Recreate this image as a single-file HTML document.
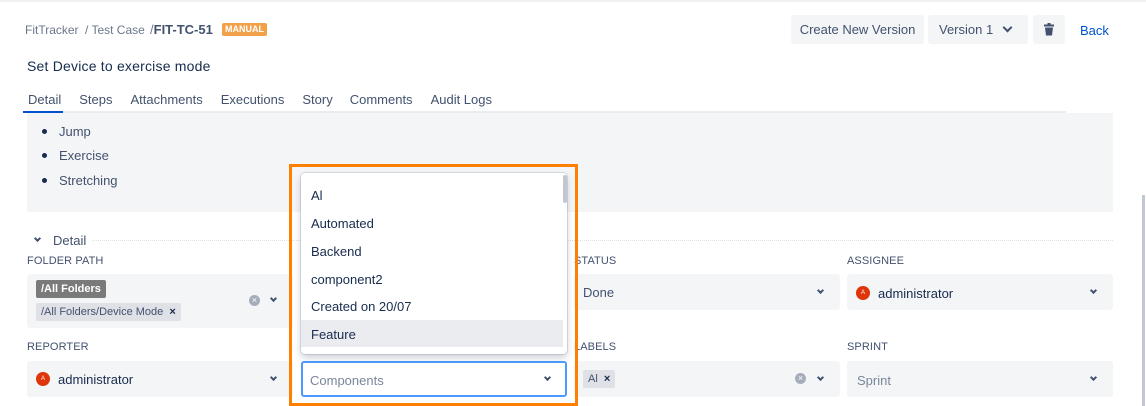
<!DOCTYPE html>
<html><head><meta charset="utf-8"><style>
*{box-sizing:border-box;margin:0;padding:0}
body{width:1146px;height:406px;overflow:hidden;background:#fff;font-family:"Liberation Sans",sans-serif;color:#172b4d;position:relative;font-size:13px}
.a{position:absolute;white-space:nowrap}
.btn{position:absolute;background:#f4f5f7;border-radius:3px;color:#42526e;font-size:13px;line-height:29px;text-align:center;top:15px;height:29px}
.lbl{position:absolute;font-size:11px;color:#42526e;letter-spacing:0.1px}
.fld{position:absolute;background:#f4f5f7;border-radius:3px}
.chev{position:absolute;width:6px;height:6px;border-right:2px solid #42526e;border-bottom:2px solid #42526e;transform:rotate(45deg)}
.av{position:absolute;width:14px;height:14px;border-radius:50%;background:#de350b;color:#fff;font-size:6px;text-align:center;line-height:14px}
.clr{position:absolute;width:11px;height:11px;border-radius:50%;background:#a5adba;color:#fff;font-size:9px;line-height:11px;text-align:center}
.it{position:absolute;left:10px;font-size:13px;color:#172b4d}
</style></head><body>
<div class="a" style="left:0;top:0;width:1146px;height:2px;background:#f0f1f3"></div>
<div class="a" style="left:25px;top:23px;font-size:12px;color:#6b778c">FitTracker</div>
<div class="a" style="left:85px;top:23px;font-size:12px;color:#6b778c">/ Test Case</div>
<div class="a" style="left:150px;top:22px;font-size:13px;color:#6b778c">/<b style="color:#42526e">FIT-TC-51</b></div>
<div class="a" style="left:222px;top:23px;height:13px;padding:0 3px;background:#f3a04a;color:#fff;font-size:9px;font-weight:bold;line-height:13px;border-radius:2px">MANUAL</div>
<div class="a" style="left:27px;top:58px;font-size:14px;color:#172b4d;letter-spacing:0.2px">Set Device to exercise mode</div>
<div class="a" style="left:28px;top:92px;font-size:13px;color:#42526e;word-spacing:0">Detail<span style="margin-left:18px">Steps</span><span style="margin-left:18px">Attachments</span><span style="margin-left:18px">Executions</span><span style="margin-left:18px">Story</span><span style="margin-left:17px">Comments</span><span style="margin-left:18px">Audit Logs</span></div>
<div class="a" style="left:23px;top:111px;width:1043px;height:2px;background:#ebecf0"></div>
<div class="a" style="left:23px;top:111px;width:40px;height:2px;background:#0052cc"></div>

<div class="btn" style="left:791px;width:133px">Create New Version</div>
<div class="btn" style="left:928px;width:100px;text-align:left;padding-left:11px">Version 1</div>
<div class="chev" style="left:1004px;top:24px;width:7px;height:7px"></div>
<div class="btn" style="left:1033px;width:32px"></div>
<svg class="a" style="left:1043px;top:23px" width="12" height="13" viewBox="0 0 12 13"><rect x="1" y="1.5" width="10" height="2" fill="#42526e"/><rect x="4.5" y="0" width="3" height="2" fill="#42526e"/><path d="M2 4.5h8l-1 8H3z" fill="#42526e"/></svg>
<div class="a" style="left:1080px;top:23px;color:#0052cc;font-size:13px">Back</div>

<div class="a" style="left:27px;top:113px;width:1086px;height:99px;background:#f4f5f7"></div>
<div class="a" style="left:42px;top:129px;width:5px;height:5px;border-radius:50%;background:#172b4d"></div>
<div class="a" style="left:59px;top:124px;color:#42526e">Jump</div>
<div class="a" style="left:42px;top:153px;width:5px;height:5px;border-radius:50%;background:#172b4d"></div>
<div class="a" style="left:59px;top:148px;color:#42526e">Exercise</div>
<div class="a" style="left:42px;top:178px;width:5px;height:5px;border-radius:50%;background:#172b4d"></div>
<div class="a" style="left:59px;top:173px;color:#42526e">Stretching</div>

<div class="chev" style="left:35px;top:236px;width:5px;height:5px"></div>
<div class="a" style="left:53px;top:233px;color:#42526e">Detail</div>
<div class="a" style="left:92px;top:240px;width:1021px;border-top:1px dotted #dfe1e6"></div>

<div class="lbl" style="left:27px;top:255px">FOLDER PATH</div>
<div class="lbl" style="left:574px;top:255px">STATUS</div>
<div class="lbl" style="left:847px;top:255px">ASSIGNEE</div>
<div class="fld" style="left:27px;top:274px;width:266px;height:54px"></div>
<div class="a" style="left:36px;top:280px;height:18px;padding:0 5px;background:#7a7a7a;color:#fff;font-size:11px;font-weight:bold;line-height:18px;border-radius:2px">/All Folders</div>
<div class="a" style="left:36px;top:303px;height:18px;padding:0 5px;background:#dfe1e6;color:#42526e;font-size:11px;line-height:18px;border-radius:2px">/All Folders/Device Mode &nbsp;<b style="color:#172b4d">×</b></div>
<div class="clr" style="left:249px;top:295px">×</div>
<div class="chev" style="left:271px;top:296px;width:5px;height:5px"></div>
<div class="fld" style="left:574px;top:274px;width:266px;height:36px"></div>
<div class="a" style="left:583px;top:285px;color:#42526e">Done</div>
<div class="chev" style="left:818px;top:288px;width:5px;height:5px"></div>
<div class="fld" style="left:847px;top:274px;width:266px;height:36px"></div>
<div class="av" style="left:856px;top:286px">A</div>
<div class="a" style="left:878px;top:286px;color:#172b4d">administrator</div>
<div class="chev" style="left:1091px;top:288px;width:5px;height:5px"></div>

<div class="lbl" style="left:27px;top:341px">REPORTER</div>
<div class="lbl" style="left:574px;top:341px">LABELS</div>
<div class="lbl" style="left:847px;top:341px">SPRINT</div>
<div class="fld" style="left:27px;top:361px;width:266px;height:36px"></div>
<div class="av" style="left:36px;top:372px">A</div>
<div class="a" style="left:58px;top:372px;color:#172b4d">administrator</div>
<div class="chev" style="left:271px;top:375px;width:5px;height:5px"></div>
<div class="fld" style="left:574px;top:361px;width:266px;height:36px"></div>
<div class="a" style="left:583px;top:370px;height:18px;padding:0 5px;background:#dfe1e6;color:#42526e;font-size:11px;line-height:18px;border-radius:2px">Al &nbsp;<b style="color:#172b4d">×</b></div>
<div class="clr" style="left:795px;top:373px">×</div>
<div class="chev" style="left:818px;top:375px;width:5px;height:5px"></div>
<div class="fld" style="left:847px;top:361px;width:266px;height:36px"></div>
<div class="a" style="left:857px;top:373px;color:#7a869a">Sprint</div>
<div class="chev" style="left:1091px;top:375px;width:5px;height:5px"></div>

<div class="a" style="left:289px;top:164px;width:289px;height:242px;border:3px solid #ff8000"></div>
<div class="a" style="left:301px;top:173px;width:266px;height:181px;background:#fff;border-radius:4px;box-shadow:0 0 0 1px rgba(9,30,66,.12),0 4px 8px rgba(9,30,66,.2);overflow:hidden">
<div class="a" style="left:0;top:147px;width:262px;height:27px;background:#ebecf0"></div>
<div class="it" style="top:15px">Al</div>
<div class="it" style="top:43px">Automated</div>
<div class="it" style="top:71px">Backend</div>
<div class="it" style="top:99px">component2</div>
<div class="it" style="top:126px">Created on 20/07</div>
<div class="it" style="top:154px">Feature</div>
<div class="a" style="left:262px;top:2px;width:4px;height:28px;background:#c1c7d0;border-radius:2px"></div>
</div>
<div class="a" style="left:301px;top:361px;width:266px;height:36px;border:2px solid #4c9aff;border-radius:3px;background:#fff"></div>
<div class="a" style="left:310px;top:373px;color:#7a869a">Components</div>
<div class="chev" style="left:545px;top:375px;width:5px;height:5px"></div>

<div class="a" style="left:1142px;top:195px;width:3px;height:211px;background:#c1c7d0"></div>
</body></html>
